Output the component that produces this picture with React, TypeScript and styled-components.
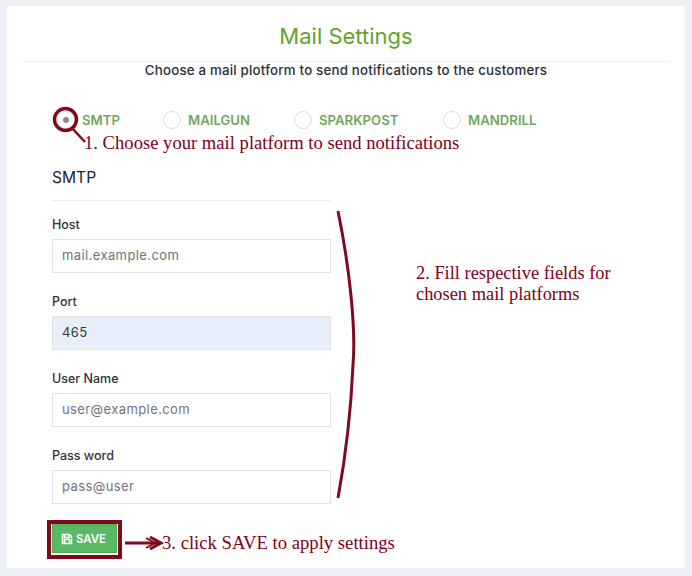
import React from "react";
import styled, { createGlobalStyle } from "styled-components";

const Global = createGlobalStyle`
  html, body { margin: 0; padding: 0; background: #edf1f6; }
  body { font-family: Inter, "Open Sans", sans-serif; }
`;

const Page = styled.div`
  position: relative;
  width: 692px;
  height: 576px;
  padding: 6px 7px 8px;
  box-sizing: border-box;
  overflow: hidden;
`;

const Card = styled.main`
  background: #fff;
  height: 562px;
  padding: 0 15px;
  box-sizing: border-box;
`;

const Title = styled.h1`
  margin: 0;
  height: 56px;
  box-sizing: border-box;
  padding-top: 16px;
  border-bottom: 1px solid #eeeeee;
  font-size: 22px;
  line-height: 28px;
  font-weight: 400;
  color: #66a02c;
  text-align: center;
`;

const Subtitle = styled.p`
  margin: 0;
  height: 18px;
  font-size: 13.3px;
  line-height: 17px;
  letter-spacing: 0.2px;
  font-weight: 500;
  color: #2b2f38;
  text-align: center;
`;

const Body = styled.div`
  padding: 0 30px;
`;

const RadioRow = styled.div`
  display: flex;
  align-items: center;
  height: 20px;
  margin-top: 30px;
`;

const RadioOption = styled.label<{ $width: number; $inset?: number }>`
  display: flex;
  align-items: center;
  gap: 7px;
  width: ${(p) => p.$width}px;
  padding-left: ${(p) => p.$inset ?? 0}px;
  box-sizing: border-box;
  flex: none;
`;

const RadioCircle = styled.span<{ $checked?: boolean }>`
  width: 18px;
  height: 18px;
  flex: none;
  box-sizing: border-box;
  border-radius: 50%;
  border: 1px solid #dddddd;
  background: #fff;
  display: flex;
  align-items: center;
  justify-content: center;
  &::after {
    content: "";
    display: ${(p) => (p.$checked ? "block" : "none")};
    width: 6px;
    height: 6px;
    border-radius: 50%;
    background: #8a8a8a;
  }
`;

const RadioLabel = styled.span`
  font-size: 13.2px;
  font-weight: 600;
  color: #72a65c;
  white-space: nowrap;
`;

const Form = styled.form`
  width: 279px;
  margin-top: 38px;
`;

const FormTitle = styled.h2`
  margin: 0 0 14px;
  font-size: 15.6px;
  line-height: 20px;
  font-weight: 400;
  color: #20242c;
  height: 32px;
  border-bottom: 1px solid #eeeeee;
`;

const Field = styled.div`
  height: 77px;
  display: flex;
  flex-direction: column;
`;

const FieldLabel = styled.label`
  font-size: 12.5px;
  line-height: 20px;
  font-weight: 500;
  color: #2f333b;
  height: 24px;
`;

const Input = styled.input<{ $filled?: boolean }>`
  width: 100%;
  height: 34px;
  box-sizing: border-box;
  padding: 0 9px 2px;
  border: 1px solid #e2e2e2;
  outline: none;
  font-family: inherit;
  font-size: 13px;
  letter-spacing: 0.4px;
  color: #33373e;
  background: ${(p) => (p.$filled ? "#e8effa" : "#fff")};
  &::placeholder {
    color: #6f747c;
    opacity: 1;
  }
`;

const SaveWrap = styled.div`
  position: relative;
  width: 65px;
  margin-top: 1px;
`;

const SaveButton = styled.button`
  width: 65px;
  height: 29px;
  background: #59b966;
  color: #fff;
  border: 1px solid #4cae4c;
  font-family: inherit;
  font-size: 11.4px;
  font-weight: 600;
  display: flex;
  align-items: center;
  justify-content: center;
  gap: 3px;
  padding: 0 2px 0 0;
`;

const Highlight = styled.span`
  position: absolute;
  left: -5px;
  top: -4px;
  width: 75px;
  height: 39px;
  box-sizing: border-box;
  border: 4px solid #7f0a1f;
  pointer-events: none;
`;

const Overlay = styled.svg`
  position: absolute;
  left: 0;
  top: 0;
  pointer-events: none;
`;

const Note = styled.div<{ $x: number; $y: number; $size: number }>`
  position: absolute;
  left: ${(p) => p.$x}px;
  top: ${(p) => p.$y}px;
  font-family: "Liberation Serif", serif;
  font-size: ${(p) => p.$size}px;
  line-height: 21px;
  color: #800020;
  white-space: nowrap;
`;

const options = [
  { name: "SMTP", width: 111, inset: 5, checked: true },
  { name: "MAILGUN", width: 131 },
  { name: "SPARKPOST", width: 149 },
  { name: "MANDRILL", width: 100 },
];

const fields = [
  { label: "Host", placeholder: "mail.example.com" },
  { label: "Port", value: "465" },
  { label: "User Name", placeholder: "user@example.com" },
  { label: "Pass word", placeholder: "pass@user" },
];

export default function App() {
  return (
    <Page>
      <Global />
      <Card>
        <Title>Mail Settings</Title>
        <Subtitle>Choose a mail plotform to send notifications to the customers</Subtitle>
        <Body>
          <RadioRow>
            {options.map((o) => (
              <RadioOption key={o.name} $width={o.width} $inset={o.inset}>
                <RadioCircle $checked={o.checked} />
                <RadioLabel>{o.name}</RadioLabel>
              </RadioOption>
            ))}
          </RadioRow>
          <Form>
            <FormTitle>SMTP</FormTitle>
            {fields.map((f) => (
              <Field key={f.label}>
                <FieldLabel>{f.label}</FieldLabel>
                <Input placeholder={f.placeholder} defaultValue={f.value} $filled={!!f.value} />
              </Field>
            ))}
            <SaveWrap>
              <SaveButton type="button">
                <svg width="12" height="12" viewBox="0 0 24 24" fill="none" stroke="currentColor" strokeWidth="3">
                  <path d="M3 3h14l4 4v14H3z" />
                  <path d="M7 3v6h9V3" />
                  <path d="M7 21v-8h10v8" />
                </svg>
                SAVE
              </SaveButton>
              <Highlight />
            </SaveWrap>
          </Form>
        </Body>
      </Card>
      <Overlay width="692" height="576" viewBox="0 0 692 576" fill="none" stroke="#7f0a1f">
        <circle cx="65.5" cy="119.5" r="11" strokeWidth="3.4" />
        <path d="M72 128 L85 142" strokeWidth="2.5" />
        <path d="M338 211 C 350 270, 356 330, 353 365 C 351 410, 345 460, 338 498" strokeWidth="3" />
        <path d="M125 543 H160" strokeWidth="3" />
        <path d="M150 537 L161 543 L150 549" strokeWidth="3" />
        <path d="M146 538 L155 543 L146 548" strokeWidth="2" />
      </Overlay>
      <Note $x={84} $y={132} $size={18.62}>1. Choose your mail platform to send notifications</Note>
      <Note $x={416} $y={263} $size={18.4}>2. Fill respective fields for<br />chosen mail platforms</Note>
      <Note $x={162} $y={532} $size={18.67}>3. click SAVE to apply settings</Note>
    </Page>
  );
}
